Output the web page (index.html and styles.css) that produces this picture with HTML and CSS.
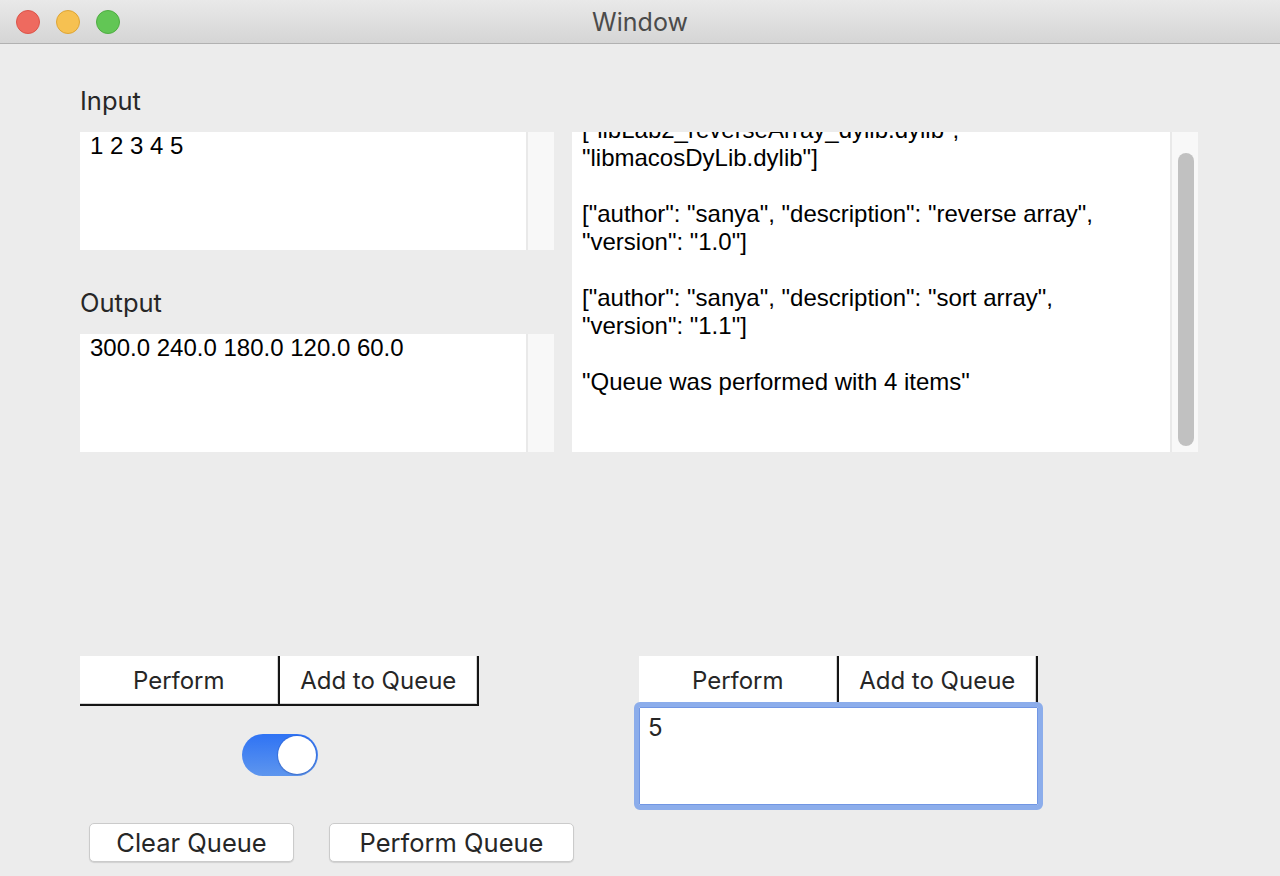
FILE: index.html
```html
<!DOCTYPE html>
<html>
<head>
<meta charset="utf-8">
<title>Window</title>
<link rel="stylesheet" href="styles.css">
</head>
<body>
<div class="window">
  <header class="titlebar">
    <div class="lights">
      <span class="light red"></span>
      <span class="light yellow"></span>
      <span class="light green"></span>
    </div>
    <div class="title">Window</div>
    <div></div>
  </header>
  <main class="content">
    <section class="top">
      <div class="left-col">
        <div class="label">Input</div>
        <div class="textbox">
          <div class="text-area">1 2 3 4 5</div>
          <div class="track"></div>
        </div>
        <div class="label label-output">Output</div>
        <div class="textbox">
          <div class="text-area">300.0 240.0 180.0 120.0 60.0</div>
          <div class="track"></div>
        </div>
      </div>
      <div class="log">
        <div class="log-view">
          <div class="log-text">
            <div class="line">["libLab2_reverseArray_dylib.dylib",</div>
            <div class="line">"libmacosDyLib.dylib"]</div>
            <div class="line">&nbsp;</div>
            <div class="line">["author": "sanya", "description": "reverse array",</div>
            <div class="line">"version": "1.0"]</div>
            <div class="line">&nbsp;</div>
            <div class="line">["author": "sanya", "description": "sort array",</div>
            <div class="line">"version": "1.1"]</div>
            <div class="line">&nbsp;</div>
            <div class="line">"Queue was performed with 4 items"</div>
          </div>
        </div>
        <div class="log-track"><div class="thumb"></div></div>
      </div>
    </section>
    <section class="bottom">
      <div class="left-controls">
        <div class="seg">
          <button class="seg-btn">Perform</button>
          <button class="seg-btn">Add to Queue</button>
        </div>
        <div class="toggle-row">
          <div class="toggle"><div class="knob"></div></div>
        </div>
        <div class="queue-row">
          <button class="push push-clear">Clear Queue</button>
          <button class="push push-perform">Perform Queue</button>
        </div>
      </div>
      <div class="right-controls">
        <div class="seg">
          <button class="seg-btn">Perform</button>
          <button class="seg-btn">Add to Queue</button>
        </div>
        <div class="field">5</div>
      </div>
    </section>
  </main>
</div>
</body>
</html>
```

FILE: styles.css
```css
* { box-sizing: border-box; }
html, body { margin: 0; padding: 0; }
body {
  width: 1280px;
  height: 876px;
  overflow: hidden;
  background: #ececec;
  font-family: Inter, "Noto Sans", sans-serif;
}
.window {
  width: 1280px;
  height: 876px;
  background: #ececec;
}
.titlebar {
  height: 44px;
  display: grid;
  grid-template-columns: 1fr auto 1fr;
  align-items: center;
  background: linear-gradient(#e9e9e9, #d5d5d5);
  border-bottom: 1px solid #b1b1b1;
}
.lights {
  display: flex;
  gap: 16px;
  padding-left: 16px;
}
.light {
  width: 24px;
  height: 24px;
  border-radius: 50%;
  display: block;
}
.red { background: #ee6a5f; border: 1px solid #dc5449; }
.yellow { background: #f6c151; border: 1px solid #dea535; }
.green { background: #62c655; border: 1px solid #4fad42; }
.title {
  font-size: 25px;
  color: #4b4b4b;
  font-weight: 400;
  padding-top: 1px;
}
.content {
  padding: 43px 0 0 80px;
}
.top {
  display: flex;
  gap: 18px;
}
.left-col {
  width: 474px;
  display: flex;
  flex-direction: column;
}
.label {
  font-size: 25.5px;
  line-height: 28px;
  color: #272727;
  margin-bottom: 17px;
}
.label-output { margin-top: 39px; }
.textbox {
  height: 118px;
  display: flex;
  background: #fff;
}
.text-area {
  flex: 1;
  padding: 0 10px;
  font-family: "Liberation Sans", Arial, sans-serif;
  font-size: 24px;
  line-height: 28px;
  color: #000;
}
.track {
  width: 28px;
  border-left: 2px solid #e9e9e9;
  background: #f8f8f8;
}
.log {
  width: 626px;
  height: 320px;
  margin-top: 45px;
  display: flex;
}
.log-view {
  flex: 1;
  background: #fff;
  overflow: hidden;
}
.log-text {
  margin-top: -16px;
  padding: 0 10px;
  font-family: "Liberation Sans", Arial, sans-serif;
  font-size: 24px;
  line-height: 28px;
  color: #000;
  white-space: nowrap;
}
.log-track {
  width: 28px;
  border-left: 2px solid #e9e9e9;
  background: #f8f8f8;
  padding: 21px 4px 6px 6px;
  display: flex;
}
.thumb {
  flex: 1;
  background: #c1c1c1;
  border-radius: 8px;
}
.bottom {
  margin-top: 204px;
  display: grid;
  grid-template-columns: 559px 399px;
}
.left-controls, .right-controls {
  display: flex;
  flex-direction: column;
}
.seg {
  display: flex;
  width: 399px;
  height: 50px;
}
.seg-btn {
  flex: 1;
  margin: 0;
  padding: 0;
  background: #fff;
  border: none;
  border-right: 2px solid #151515;
  border-bottom: 2px solid #151515;
  box-shadow: inset -1px -1px 0 #d4d4d4;
  font-family: Inter, "Noto Sans", sans-serif;
  font-size: 24px;
  color: #262626;
}
.toggle-row {
  width: 399px;
  margin-top: 28px;
  display: flex;
  justify-content: center;
}
.toggle {
  width: 76px;
  height: 42px;
  border-radius: 21px;
  background: linear-gradient(#2f73f4, #5e96ee);
  padding: 2px;
  display: flex;
  justify-content: flex-end;
}
.knob {
  width: 38px;
  height: 38px;
  border-radius: 50%;
  background: #fff;
  box-shadow: 0 0 0 1px rgba(40, 90, 200, 0.35), 0 1px 2px rgba(0, 0, 0, 0.15);
}
.queue-row {
  margin-top: 47px;
  margin-left: 9px;
  display: flex;
  gap: 35px;
}
.push {
  flex-shrink: 0;
  height: 39px;
  margin: 0;
  padding: 0;
  background: #fff;
  border: 1px solid #cbcbcb;
  border-radius: 5px;
  box-shadow: 0 1px 1px rgba(0, 0, 0, 0.12);
  font-family: Inter, "Noto Sans", sans-serif;
  font-size: 25.5px;
  color: #262626;
}
.push-clear { width: 205px; }
.push-perform { width: 245px; }
.field {
  width: 399px;
  margin-top: 1px;
  height: 98px;
  background: #fff;
  border: 1px solid #7196e3;
  border-radius: 1px;
  outline: 5px solid #8cadeb;
  padding: 6px 8px;
  font-size: 24px;
  line-height: 28px;
  color: #262626;
}
```
